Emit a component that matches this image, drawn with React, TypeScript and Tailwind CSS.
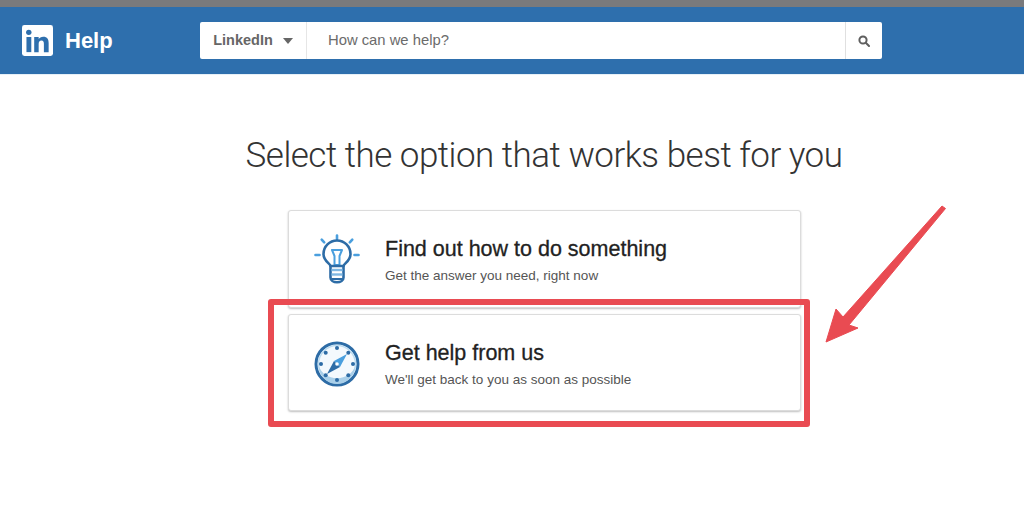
import React from "react";

function LinkedInLogo() {
  return (
    <svg width="31" height="31" viewBox="0 0 32 32" className="shrink-0">
      <rect x="0" y="0" width="32" height="32" rx="2.5" fill="#fff" />
      <circle cx="7" cy="7.600" r="2.800" fill="#2e6fad" />
      <rect x="4.600" y="12.400" width="5" height="15.600" fill="#2e6fad" />
      <path
        d="M12.600 12.400h4.600v2.100c.8-1.400 2.500-2.500 4.700-2.500 4.300 0 5.600 2.700 5.600 6.600v9.400h-4.900v-8.500c0-2-.5-3.500-2.500-3.500-2.100 0-2.900 1.500-2.900 3.500v8.500h-4.600z"
        fill="#2e6fad"
      />
    </svg>
  );
}

function BulbIcon() {
  return (
    <svg width="46" height="50" viewBox="0 0 46 50" fill="none" strokeLinecap="round" strokeLinejoin="round">
      <g stroke="#4a9fde" strokeWidth="2.600">
        <path d="M23 1.500v3.500" />
        <path d="M7.700 5.700l2.500 2.700" />
        <path d="M38.300 5.700l-2.500 2.700" />
        <path d="M1.500 21h4" />
        <path d="M40.500 21h4" />
      </g>
      <path d="M18 16h10l-2.500 6v9h-5v-9z" stroke="#4a9fde" strokeWidth="2" />
      <path d="M16.500 32c-.5-2.500-7-5-7-12a13.500 13.500 0 0 1 27 0c0 7-6.500 9.500-7 12z" stroke="#2d6ca6" strokeWidth="2.600" />
      <path d="M16.500 32v11.500c0 3 3 4.800 6.500 4.800s6.500-1.800 6.500-4.800v-11.500" stroke="#2d6ca6" strokeWidth="2.600" />
      <path d="M17.500 36h11" stroke="#7fb8e3" strokeWidth="2.400" strokeLinecap="butt" />
      <path d="M17.500 40.500h11" stroke="#7fb8e3" strokeWidth="2.400" strokeLinecap="butt" />
      <path d="M18 45h10" stroke="#2d6ca6" strokeWidth="2" strokeLinecap="butt" />
    </svg>
  );
}

function CompassIcon() {
  const dots = [
    [23, 7],
    [34.300, 11.700],
    [39, 23],
    [34.300, 34.300],
    [23, 39],
    [11.700, 34.300],
    [7, 23],
    [11.700, 11.700],
  ];
  return (
    <svg width="46" height="46" viewBox="0 0 46 46" fill="none">
      <circle cx="23" cy="23" r="21" fill="#f4f9fd" stroke="#2d6ca6" strokeWidth="3" />
      <circle cx="23" cy="23" r="18.500" stroke="#bcdcf1" strokeWidth="1.500" />
      <path d="M5 25a18 18 0 0 0 36 0a18.500 16 0 0 1-36 0z" fill="#a9cfe9" />
      {dots.map(([cx, cy]) => (
        <circle key={`${cx}-${cy}`} cx={cx} cy={cy} r="2" fill="#2d6ca6" />
      ))}
      <path d="M33 13L20 20L26 26z" fill="#4a9fde" />
      <path d="M13 33L20 20L26 26z" fill="#2d6ca6" />
      <circle cx="23" cy="23" r="1.800" fill="#fff" />
    </svg>
  );
}

function OptionCard({
  icon,
  title,
  subtitle,
  className,
}: {
  icon: React.ReactNode;
  title: string;
  subtitle: string;
  className: string;
}) {
  return (
    <div
      className={`flex items-center rounded-[3px] border border-[#dcdcdc] bg-white shadow-[0_1px_2px_rgba(0,0,0,0.25)] ${className}`}
    >
      <div className="flex w-[96px] shrink-0 justify-center">{icon}</div>
      <div className="pl-[0.5px]">
        <h2 className="text-[21.500px] leading-[28px] text-[#222] [-webkit-text-stroke:0.3px_#222]">{title}</h2>
        <p className="mt-[5px] text-[13.500px] leading-[16px] text-[#555]">{subtitle}</p>
      </div>
    </div>
  );
}

export default function App() {
  return (
    <div className="relative h-[510px] w-[1024px] overflow-hidden bg-white font-['Liberation_Sans',Arial,sans-serif]">
      {/* Top strip */}
      <div className="h-[7px] bg-[#7a7a7c]" />

      {/* Header */}
      <header className="flex h-[67px] items-center bg-[#2e6fad] pl-[22px] shadow-[0_1px_0_#e6f0f8]">
        <LinkedInLogo />
        <span className="ml-[12px] w-[135px] text-[22px] font-bold text-white">Help</span>
        <div className="flex h-[37px] w-[682px] overflow-hidden rounded-[2px] bg-white">
          <div className="flex w-[107px] items-center justify-center gap-[10px] border-r border-[#e6e6e6] text-[14.500px] font-bold text-[#666]">
            LinkedIn
            <span className="h-0 w-0 border-x-[5.500px] border-t-[6px] border-x-transparent border-t-[#666]" />
          </div>
          <div className="flex flex-1 items-center pl-[21px] text-[14.800px] text-[#6b6b6b]">How can we help?</div>
          <div className="flex w-[37px] items-center justify-center border-l border-[#e0e0e0]">
            <svg width="12" height="12" viewBox="0 0 12 12" fill="none" stroke="#5f5f5f" strokeWidth="2">
              <circle cx="5" cy="5" r="3.600" />
              <path d="M7.800 7.800L11 11" strokeLinecap="round" />
            </svg>
          </div>
        </div>
      </header>

      {/* Main */}
      <main className="flex flex-col items-center pl-[64px]">
        <h1 className="mt-[57px] font-['Roboto',sans-serif] text-[35px] leading-[50px] font-light tracking-[-0.5px] whitespace-nowrap text-[#333]">
          Select the option that works best for you
        </h1>
        <div className="mt-[29px] flex w-[513px] flex-col">
          <OptionCard
            className="h-[98px]"
            icon={<BulbIcon />}
            title="Find out how to do something"
            subtitle="Get the answer you need, right now"
          />
          <OptionCard
            className="mt-[6px] h-[97px] pt-[2px]"
            icon={<CompassIcon />}
            title="Get help from us"
            subtitle="We'll get back to you as soon as possible"
          />
        </div>
      </main>

      {/* Annotations on top of the screenshot */}
      <div className="absolute top-[299px] left-[268px] h-[128px] w-[542px] rounded-[3px] border-[6px] border-[#e94b52]" />
      <svg className="absolute top-[205px] left-[825px]" width="122" height="140" viewBox="0 0 122 140">
        <path
          d="M117 1L120.500 3.500L24 120L33 123L1 137L11 104L18 112z"
          fill="#e94b52"
          stroke="#e94b52"
          strokeWidth="1"
          strokeLinejoin="round"
        />
      </svg>
    </div>
  );
}
